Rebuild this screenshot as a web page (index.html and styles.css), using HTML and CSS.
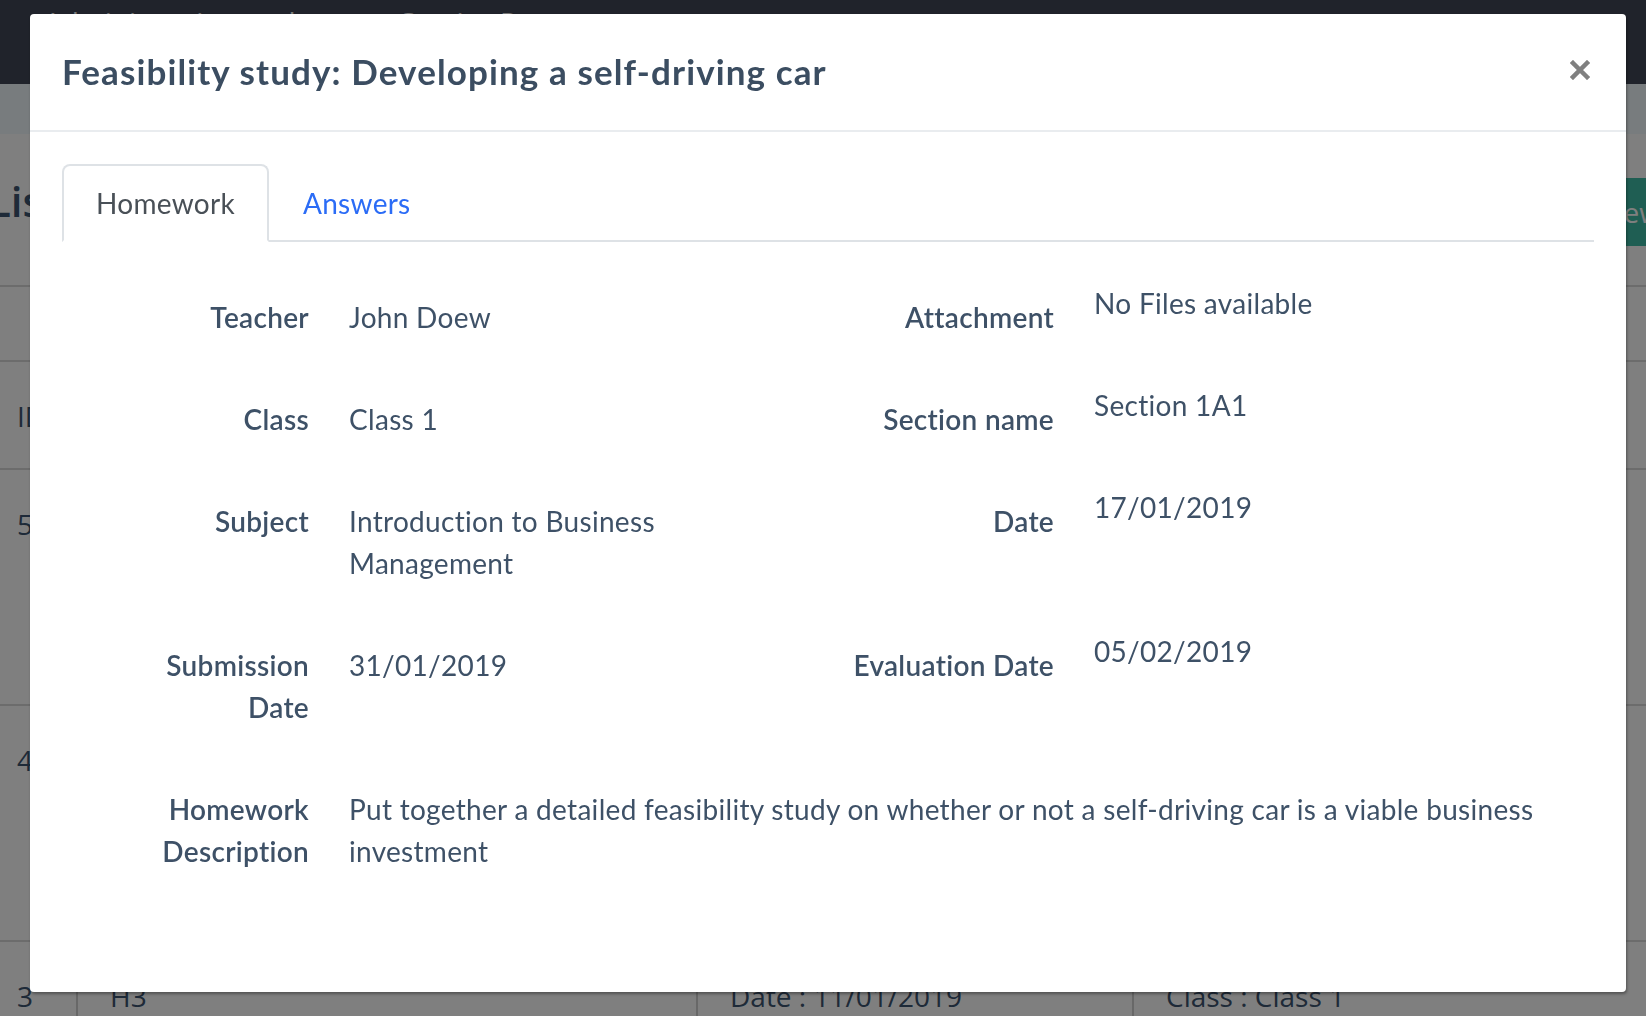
FILE: index.html
```html
<!DOCTYPE html>
<html>
<head>
    <meta charset="utf-8">
    <link rel="stylesheet" href="styles.css">
</head>
<body>
    <div class="app">
        <nav class="navbar">
            <span class="nav-item">Administration tools ▾</span>
            <span class="nav-item">Service Reports ▾</span>
        </nav>
        <div class="subbar"></div>

        <div class="content">
            <div class="page-head">
                <h1>List</h1>
                <button class="btn-new">New</button>
            </div>
            <div class="filter-row"></div>

            <table class="list">
                <tr class="list-head">
                    <td class="col-id">ID</td>
                    <td class="col-name"></td>
                    <td class="col-date"></td>
                    <td class="col-class"></td>
                </tr>
                <tr class="list-row">
                    <td class="col-id">5</td>
                    <td class="col-name">H5</td>
                    <td class="col-date">Date : 17/01/2019</td>
                    <td class="col-class">Class : Class 1</td>
                </tr>
                <tr class="list-row">
                    <td class="col-id">4</td>
                    <td class="col-name">H4</td>
                    <td class="col-date">Date : 14/01/2019</td>
                    <td class="col-class">Class : Class 1</td>
                </tr>
                <tr class="list-row">
                    <td class="col-id">3</td>
                    <td class="col-name">H3</td>
                    <td class="col-date">Date : 11/01/2019</td>
                    <td class="col-class">Class : Class 1</td>
                </tr>
            </table>
        </div>
    </div>

    <!-- Homework details modal -->
    <div class="backdrop"></div>
    <div class="modal">
        <div class="modal-header">
            <h5 class="modal-title">Feasibility study: Developing a self-driving car</h5>
            <button class="close" aria-label="Close">
                <svg width="20" height="20" viewBox="0 0 20 20">
                    <path d="M3 3 L17 17 M17 3 L3 17" stroke="#808080" stroke-width="4.5" stroke-linecap="square"/>
                </svg>
            </button>
        </div>

        <div class="modal-body">
            <ul class="nav-tabs">
                <li class="tab active">Homework</li>
                <li class="tab">Answers</li>
            </ul>

            <div class="fields">
                <div class="field-row">
                    <div class="label">Teacher</div>
                    <div class="value">John Doew</div>
                    <div class="label">Attachment</div>
                    <div class="value side">No Files available</div>
                </div>
                <div class="field-row">
                    <div class="label">Class</div>
                    <div class="value">Class 1</div>
                    <div class="label">Section name</div>
                    <div class="value side">Section 1A1</div>
                </div>
                <div class="field-row">
                    <div class="label">Subject</div>
                    <div class="value">Introduction to Business Management</div>
                    <div class="label">Date</div>
                    <div class="value side">17/01/2019</div>
                </div>
                <div class="field-row">
                    <div class="label">Submission Date</div>
                    <div class="value">31/01/2019</div>
                    <div class="label">Evaluation Date</div>
                    <div class="value side">05/02/2019</div>
                </div>
                <div class="field-row">
                    <div class="label">Homework Description</div>
                    <div class="value wide">Put together a detailed feasibility study on whether or not a self-driving car is a viable business investment</div>
                </div>
            </div>
        </div>
    </div>
</body>
</html>
```

FILE: styles.css
```css
body {
    margin: 0;
    overflow: hidden;
    font-family: "Open Sans", "Liberation Sans", sans-serif;
    background: #fff;
    color: #3d5470;
}

/* page behind the modal */
.navbar {
    height: 84px;
    background: #404656;
    display: flex;
    gap: 70px;
    padding-left: 44px;
    box-sizing: border-box;
}

.nav-item {
    font-size: 28px;
    line-height: 40px;
    color: #f2f2f2;
    margin-top: 2px;
}

.subbar {
    height: 50px;
    background: #f0f8fc;
}

.page-head {
    height: 153px;
    box-sizing: border-box;
    display: flex;
    justify-content: space-between;
    align-items: flex-start;
    padding-top: 44px;
    margin: 0 -55px 0 -12px;
    border-bottom: 2px solid #d8d8d8;
}

.page-head h1 {
    margin: 0;
    font-size: 42px;
    line-height: 46px;
    font-weight: 600;
}

.btn-new {
    height: 68px;
    padding: 0 40px;
    border: none;
    border-radius: 6px;
    background: #3ebca6;
    color: #fff;
    font-family: "Open Sans", sans-serif;
    font-size: 28px;
}

.filter-row {
    height: 75px;
    box-sizing: border-box;
    border-bottom: 2px solid #d8d8d8;
}

.list {
    width: 100%;
    table-layout: fixed;
    border-collapse: collapse;
    font-size: 28px;
}

.list td {
    vertical-align: top;
    padding: 33px 0 0 32px;
    line-height: 42px;
    border-top: 2px solid #d8d8d8;
}

.list td + td {
    border-left: 2px solid #d0d0d0;
}

.list .col-id {
    width: 77px;
    padding-left: 17px;
    box-sizing: border-box;
}

.list .col-name {
    width: 620px;
    box-sizing: border-box;
}

.list .col-date {
    width: 436px;
    box-sizing: border-box;
}

.list-head {
    height: 107px;
}

.list-head td {
    border-top: none;
}

.list-row {
    height: 236px;
}

/* modal */
.backdrop {
    position: fixed;
    inset: 0;
    background: rgba(0, 0, 0, 0.5);
}

.modal {
    position: fixed;
    top: 14px;
    left: 30px;
    width: 1596px;
    height: 978px;
    background: #fff;
    border-radius: 4px;
    box-shadow: 1px 2px 3px rgba(0, 0, 0, 0.35);
    display: flex;
    flex-direction: column;
    font-family: Lato, "Open Sans", sans-serif;
    color: #3e5167;
}

.modal-header {
    display: flex;
    justify-content: space-between;
    align-items: center;
    padding: 33px 32px 34px 32px;
    border-bottom: 2px solid #e9ecef;
}

.modal-title {
    margin: 0;
    font-size: 35px;
    line-height: 49px;
    font-weight: 700;
    letter-spacing: 1.1px;
    color: #3b4d61;
}

.close {
    width: 20px;
    height: 20px;
    padding: 0;
    margin: 0 4px 4px 0;
    border: none;
    background: none;
    display: flex;
    cursor: pointer;
}

.modal-body {
    flex: 1;
    padding: 32px;
}

.nav-tabs {
    display: flex;
    list-style: none;
    margin: 0;
    padding: 0;
    border-bottom: 2px solid #dee2e6;
}

.tab {
    padding: 16px 32px;
    font-size: 28px;
    line-height: 42px;
    letter-spacing: 0.3px;
    color: #2b6cf6;
    border: 2px solid transparent;
    border-radius: 8px 8px 0 0;
    margin-bottom: -2px;
}

.tab.active {
    color: #495057;
    background: #fff;
    border-color: #dee2e6 #dee2e6 #fff;
}

.fields {
    margin-top: 40px;
}

.field-row {
    display: grid;
    grid-template-columns: 180px 450px 215px 1fr;
    column-gap: 40px;
    margin: 0 0 32px 67px;
    font-size: 28px;
    line-height: 42px;
    letter-spacing: 0.3px;
}

.label {
    padding: 14px 0;
    text-align: right;
    font-weight: 600;
}

.value {
    padding: 14px 0;
}

.value.side {
    padding: 0;
}

.value.wide {
    grid-column: 2 / 5;
}
```
